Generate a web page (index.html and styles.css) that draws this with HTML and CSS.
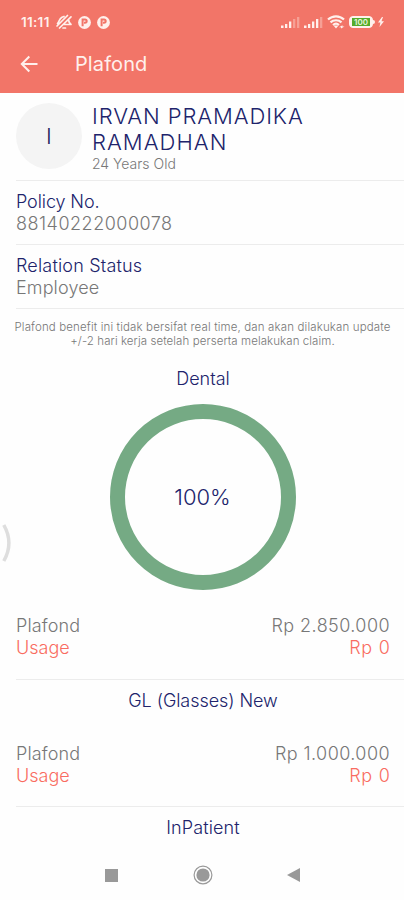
FILE: index.html
```html
<!DOCTYPE html>
<html lang="id">
<head>
<meta charset="utf-8">
<title>Plafond</title>
<link rel="stylesheet" href="styles.css">
</head>
<body>
<div class="screen">
  <header class="top">
    <div class="status">
      <span class="clock">11:11</span>
      <svg class="mute" width="18" height="16" viewBox="0 0 18 16" fill="none" stroke="currentColor" stroke-width="1.700" stroke-linecap="round" stroke-linejoin="round"><path d="M2 12 12.500 1.500M4.500 14 16 2.800M2.500 9.500C4.500 7.500 4 5 7 3.300l2-.8M13.500 6c.3 2 .8 3 2.500 4.500H9.500M8 14h2.500"/></svg>
      <svg class="badge" width="13" height="13" viewBox="0 0 13 13"><circle cx="6.500" cy="6.500" r="6.400" fill="currentColor"/><path d="M4.600 10.300V3.400H7a1.700 1.700 0 0 1 0 3.400H6" fill="none" stroke="#f27568" stroke-width="2"/></svg>
      <svg class="badge" width="13" height="13" viewBox="0 0 13 13"><circle cx="6.500" cy="6.500" r="6.400" fill="currentColor"/><path d="M4.600 10.300V3.400H7a1.700 1.700 0 0 1 0 3.400H6" fill="none" stroke="#f27568" stroke-width="2"/></svg>
      <span class="spacer"></span>
      <svg class="signal" width="19" height="12" viewBox="0 0 19 12" fill="currentColor"><path d="M0 9.500h2.500V12H0zM4 8h2.300v4H4zM8 5.500h2.300V12H8z"/><path opacity=".35" d="M12 3h2.300v9H12zM16 1h2.300v11H16z"/></svg>
      <svg class="signal" width="19" height="12" viewBox="0 0 19 12" fill="currentColor"><path d="M0 9.500h2.500V12H0zM4 8h2.300v4H4zM8 5.500h2.300V12H8zM12 3h2.300v9H12z"/><path opacity=".35" d="M16 1h2.300v11H16z"/></svg>
      <svg class="wifi" width="18" height="14" viewBox="0 0 18 14" fill="none" stroke="currentColor" stroke-width="2.200"><path d="M1 4.500C5.500.2 12.500.2 17 4.500M3.500 7.400c3-2.900 8-2.900 11 0M6 10c1.700-1.500 4.300-1.500 6 0"/><path fill="currentColor" stroke="none" d="m6.500 10.500 2.500 3 2.500-3zM12 12.200l3.500-2v1.200h2L14 13.600v-1.400z"/></svg>
      <span class="battery"><span class="charge">100</span></span>
      <svg class="bolt" width="6" height="10" viewBox="0 0 6 10" fill="currentColor"><path d="M4 0 0 5.600h2.400L1.500 10 6 4.200H3.500L5 0z"/></svg>
    </div>
    <div class="appbar">
      <svg width="18" height="18" viewBox="0 0 18 18" fill="none" stroke="currentColor" stroke-width="2"><path d="M17.500 9H2M9.300 1.500 1.800 9l7.500 7.500"/></svg>
      <h1>Plafond</h1>
    </div>
  </header>

  <main>
    <section class="profile">
      <div class="avatar">I</div>
      <div class="person">
        <div class="name"><span class="first">IRVAN PRAMADIKA</span><br><span class="last">RAMADHAN</span></div>
        <div class="age">24 Years Old</div>
      </div>
    </section>
    <section class="field">
      <div class="label policy">Policy No.</div>
      <div class="value number">88140222000078</div>
    </section>
    <section class="field">
      <div class="label relation">Relation Status</div>
      <div class="value employee">Employee</div>
    </section>
    <p class="note"><span class="note-a">Plafond benefit ini tidak bersifat real time, dan akan dilakukan update</span><br><span class="note-b">+/-2 hari kerja setelah perserta melakukan claim.</span></p>

    <section class="benefit dental">
      <h2>Dental</h2>
      <div class="ring">100%</div>
      <div class="row"><span class="caption">Plafond</span><span class="amount">Rp 2.850.000</span></div>
      <div class="row usage"><span>Usage</span><span class="used">Rp 0</span></div>
    </section>
    <section class="benefit glasses">
      <h2>GL (Glasses) New</h2>
      <div class="row"><span class="caption">Plafond</span><span class="amount">Rp 1.000.000</span></div>
      <div class="row usage"><span>Usage</span><span class="used">Rp 0</span></div>
    </section>
    <section class="benefit inpatient">
      <h2>InPatient</h2>
    </section>
  </main>

  <nav class="navbar">
    <svg width="13" height="13" viewBox="0 0 13 13"><path fill="#999" d="M0 0h13v13H0z"/></svg>
    <svg width="20" height="20" viewBox="0 0 20 20"><circle cx="10" cy="10" r="8.900" fill="none" stroke="#999" stroke-width="1.200"/><circle cx="10" cy="10" r="6.600" fill="#999"/></svg>
    <svg width="13" height="14" viewBox="0 0 13 14"><path fill="#999" d="M13 0v14L0 7z"/></svg>
  </nav>
  <svg class="edge" width="12" height="38" viewBox="0 0 12 38" fill="none" stroke="#dedede" stroke-width="3.500"><path d="M3.800 1Q14 19 3.800 37"/></svg>
</div>
</body>
</html>
```

FILE: styles.css
```css
* { box-sizing: border-box; }

body {
  margin: 0;
  background: #fefefe;
  font-family: Inter, "Liberation Sans", sans-serif;
  font-weight: 300;
  color: #777;
}

.screen {
  position: relative;
  display: flex;
  flex-direction: column;
  width: 404px;
  height: 900px;
  overflow: hidden;
}

.top {
  height: 93px;
  background: #f27568;
  color: #fff0ec;
}

.status {
  display: flex;
  align-items: center;
  height: 44px;
  padding: 0 20px 0 21px;
}

.clock {
  width: 32px;
  font-size: 13.500px;
  font-weight: 600;
  letter-spacing: 0.300px;
  white-space: nowrap;
}

.mute { margin: 0 5px 0 2px; }
.badge { margin-right: 6px; }
.spacer { flex: 1; }
.signal { margin-right: 4px; }
.wifi { margin-right: 4px; }

.battery {
  position: relative;
  width: 24px;
  height: 12px;
  padding: 1px 2px;
  border: 1px solid #fff0ec;
  border-radius: 4px;
  background: #fff0ec;
}

.battery::after {
  content: "";
  position: absolute;
  left: 22px;
  top: 3px;
  width: 3px;
  height: 4px;
  border-radius: 0 2px 2px 0;
  background: #fff0ec;
}

.charge {
  display: block;
  height: 8px;
  background: #55ab2b;
  color: #e7f5dc;
  font-size: 8px;
  font-weight: 600;
  line-height: 8px;
  text-align: center;
}

.bolt { margin-left: 5px; }

.appbar {
  display: flex;
  align-items: center;
  height: 40px;
  padding-left: 20px;
}

h1 {
  margin: 0 0 0 37px;
  font-size: 20px;
  font-weight: 400;
  letter-spacing: 0.100px;
  line-height: 24px;
}

main { flex: 1; }

.profile {
  display: flex;
  height: 88px;
  margin-left: 16px;
  padding-top: 10px;
  border-bottom: 1px solid #ececec;
}

.avatar {
  display: grid;
  place-items: center;
  width: 66px;
  height: 66px;
  border-radius: 50%;
  background: #f4f4f4;
  color: #20235f;
  font-size: 22px;
}

.person { margin-left: 10px; }

.name {
  color: #20236b;
  font-size: 22px;
  line-height: 26px;
  white-space: nowrap;
}

.first { letter-spacing: 0.900px; }
.last { letter-spacing: 1.050px; }

.age {
  font-size: 14px;
  line-height: 18px;
}

.field {
  height: 64px;
  margin-left: 16px;
  padding-top: 10px;
  border-bottom: 1px solid #ececec;
  font-size: 18px;
  line-height: 21.500px;
}

.label { color: #20236b; }
.policy { letter-spacing: -0.100px; }
.relation { letter-spacing: 0.180px; }
.number { letter-spacing: 0.500px; }
.employee { letter-spacing: 0.120px; }

.note {
  margin: 11px 0 0 1px;
  font-size: 11.500px;
  line-height: 14px;
  text-align: center;
  white-space: nowrap;
}

.note-a { letter-spacing: 0.140px; }
.note-b { letter-spacing: 0.080px; }

h2 {
  margin: 0;
  color: #20236b;
  font-size: 18px;
  font-weight: 300;
  line-height: 22px;
  text-align: center;
}

.benefit {
  margin-left: 16px;
  padding-right: 14px;
}

.benefit h2 { margin-right: -14px; margin-left: -14px; }

.dental {
  height: 332px;
  padding-top: 20px;
  border-bottom: 1px solid #ececec;
}

.ring {
  display: grid;
  place-items: center;
  width: 186px;
  height: 186px;
  margin: 14px 0 25px 93.500px;
  border: 15.500px solid #75aa84;
  border-radius: 50%;
  color: #20236b;
  font-size: 22px;
}

.row {
  display: flex;
  justify-content: space-between;
  font-size: 18px;
  line-height: 21.500px;
}

.caption { letter-spacing: 0.140px; }
.amount { letter-spacing: 0.430px; }
.used { letter-spacing: 0.700px; margin-right: -0.500px; }
.usage { color: #f96c61; }

.glasses {
  height: 127px;
  padding-top: 10px;
  border-bottom: 1px solid #ececec;
}

.glasses h2 { margin-bottom: 31px; letter-spacing: -0.060px; }
.inpatient { padding-top: 10px; }
.inpatient h2 { letter-spacing: 0.120px; }

.navbar {
  display: flex;
  align-items: center;
  justify-content: space-between;
  height: 50px;
  padding: 0 104px 0 105px;
}

.edge {
  position: absolute;
  left: 0;
  top: 524px;
}
```
